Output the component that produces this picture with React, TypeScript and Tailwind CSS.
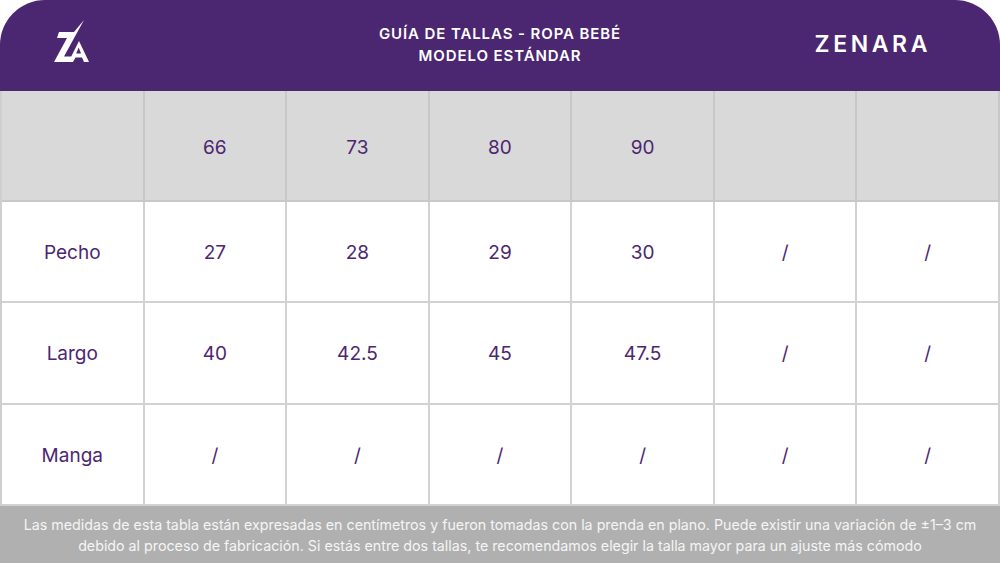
import React from "react";

const PURPLE = "#4b2671";

function Logo() {
  return (
    <svg width="60" height="55" viewBox="40 15 60 55" className="block">
      <polygon
        points="59,32 74,32 84,20 64,56.5 72.5,56.5 70.5,62 54,62 67,38 57,38"
        fill="#ffffff"
      />
      <polygon
        points="79,41 89,62 84,62 82,57.5 75.5,57.5 73,62 68.5,62"
        fill="#ffffff"
      />
      <polygon points="78.7,47.5 81,53.5 76.2,53.5" fill={PURPLE} />
    </svg>
  );
}

const sizes = ["66", "73", "80", "90", "", ""];
const rows: { label: string; values: string[] }[] = [
  { label: "Pecho", values: ["27", "28", "29", "30", "/", "/"] },
  { label: "Largo", values: ["40", "42.5", "45", "47.5", "/", "/"] },
  { label: "Manga", values: ["/", "/", "/", "/", "/", "/"] },
];

export default function App() {
  const font = { fontFamily: "Inter, 'Noto Sans', 'Liberation Sans', sans-serif" };
  return (
    <div className="w-[1000px] h-[563px] bg-white flex flex-col overflow-hidden" style={font}>
      <header className="h-[91px] shrink-0 bg-[#4b2671] rounded-t-[45px] grid grid-cols-[1fr_auto_1fr] items-start">
        <div className="pl-[40px] pt-[15px]">
          <Logo />
        </div>
        <div className="pt-[23px] text-center text-white text-[15px] font-semibold leading-[22px] tracking-[0.9px]">
          <div>GUÍA DE TALLAS - ROPA BEBÉ</div>
          <div>MODELO ESTÁNDAR</div>
        </div>
        <div className="flex justify-end pr-[69px] pt-[29px]">
          <span className="text-white text-[23px] font-semibold tracking-[3.6px] leading-[30px]">ZENARA</span>
        </div>
      </header>

      <div className="grid grid-cols-7 grid-rows-[111px_101px_102px_101px] border-l-2 border-[#cfcfcf] text-[#4b2671] text-[19px]">
        <div className="bg-[#d9d9d9] border-r-2 border-b-2 border-[#c8c8c8]" />
        {sizes.map((s, i) => (
          <div
            key={i}
            className="bg-[#d9d9d9] border-r-2 border-b-2 border-[#c8c8c8] flex items-center justify-center pt-[6px]"
          >
            {s}
          </div>
        ))}
        {rows.map((r) => (
          <React.Fragment key={r.label}>
            <div className="border-r-2 border-b-2 border-[#d2d2d2] flex items-center justify-center pt-[3px]">
              {r.label}
            </div>
            {r.values.map((v, i) => (
              <div
                key={i}
                className="border-r-2 border-b-2 border-[#d2d2d2] flex items-center justify-center pt-[3px]"
              >
                {v}
              </div>
            ))}
          </React.Fragment>
        ))}
      </div>

      <footer className="flex-1 bg-[#b0b0b0] flex items-center justify-center text-center text-[#f5f5f5] text-[14.25px] leading-[21px] pt-[1px]">
        <p>
          Las medidas de esta tabla están expresadas en centímetros y fueron tomadas con la prenda en plano. Puede existir una variación de ±1–3 cm
          <br />
          debido al proceso de fabricación. Si estás entre dos tallas, te recomendamos elegir la talla mayor para un ajuste más cómodo
        </p>
      </footer>
    </div>
  );
}
